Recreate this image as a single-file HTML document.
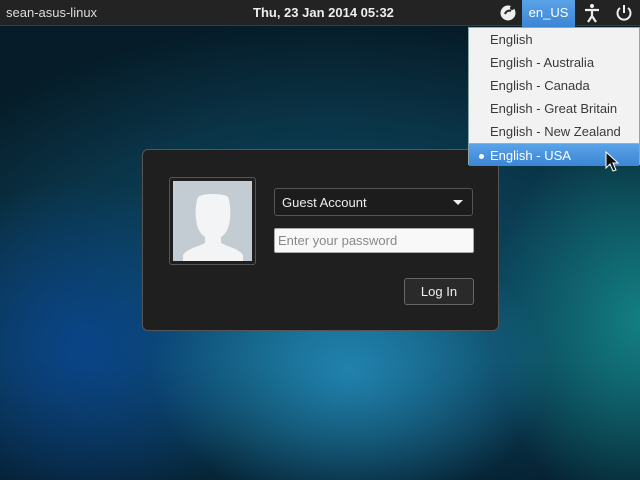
<!DOCTYPE html>
<html><head><meta charset="utf-8"><style>
*{margin:0;padding:0;box-sizing:border-box}
body{width:640px;height:480px;overflow:hidden;position:relative;font-family:"Liberation Sans","DejaVu Sans",sans-serif;
background:
radial-gradient(ellipse 200px 140px at 350px 370px, rgba(35,135,180,0.9), rgba(35,135,180,0) 100%),
radial-gradient(ellipse 150px 200px at 640px 320px, rgba(20,140,140,0.85), rgba(20,140,140,0) 100%),
radial-gradient(ellipse 180px 170px at 80px 350px, rgba(10,70,150,0.8), rgba(10,70,150,0) 100%),
linear-gradient(to bottom, rgba(0,0,0,0) 75%, rgba(3,20,35,0.6) 100%),
radial-gradient(ellipse 500px 320px at 330px 340px, #0e5878, #0a3346 70%, #061c28 100%);}
.top{position:absolute;left:0;top:0;width:640px;height:26px;background:#232323;border-bottom:1px solid #3a3a3a;color:#ddd;font-size:13px;z-index:2}
.host{position:absolute;left:6px;top:5px}
.date{position:absolute;left:253px;top:5px;font-weight:bold;color:#eee}
.ind{position:absolute;top:0;height:26px;width:28px}
.lang{position:absolute;left:522px;top:0;width:53px;height:27px;background:linear-gradient(#5aa3e8,#3c85d4);color:#fff;font-size:13px;text-align:center;padding-top:5px}
.menu{position:absolute;left:468px;top:27px;width:172px;height:138px;background:#f2f2f2;border:1px solid #8aa;font-size:13px;color:#3a3a3a;z-index:5}
.menu div{height:23px;padding:4px 0 0 21px}
.menu .sel{background:linear-gradient(#5aa3e8,#3c85d4);color:#fff;position:relative;border-top:1px solid #7bb7ee}
.menu .sel:before{content:"";position:absolute;left:10px;top:10px;width:5px;height:5px;border-radius:50%;background:#fff}
.box{position:absolute;left:142px;top:149px;width:357px;height:182px;background:#1f1f1f;border:1px solid #555;border-radius:6px;z-index:1}
.av{position:absolute;left:26px;top:27px;width:87px;height:88px;border:1px solid #555;border-radius:3px;padding:3px}
.av div{width:79px;height:80px;background:#c3ccd3;overflow:hidden;position:relative}
.sel1{position:absolute;left:131px;top:38px;width:199px;height:28px;border:1px solid #555;border-radius:3px;background:#1c1c1c;color:#eee;font-size:13px;padding:6px 0 0 7px}
.sel1:after{content:"";position:absolute;right:9px;top:11px;border:5px solid transparent;border-top:5px solid #eee}
.pw{position:absolute;left:131px;top:78px;width:200px;height:25px;background:#f8f8f8;border:1px solid #aaa;border-radius:2px;color:#888;font-size:13px;padding:4px 0 0 3px}
.btn{position:absolute;left:261px;top:128px;width:70px;height:27px;border:1px solid #666;border-radius:3px;background:#2a2a2a;color:#eee;font-size:13px;text-align:center;padding-top:5px}
</style></head><body>
<div class="top">
<span class="host">sean-asus-linux</span>
<span class="date">Thu, 23 Jan 2014 05:32</span>
<svg class="ind" style="left:494px" viewBox="0 0 28 26"><circle cx="14" cy="13" r="7.5" fill="#eee"/><path d="M11 14c1-3 4-4 6-3" stroke="#232323" stroke-width="2" fill="none"/><circle cx="18" cy="8" r="2" fill="#232323"/></svg>
<div class="lang">en_US</div>
<svg class="ind" style="left:578px" viewBox="0 0 28 26"><circle cx="14" cy="6" r="2" fill="#eee"/><path d="M7 10h14M14 10v6M14 16l-4 6M14 16l4 6" stroke="#eee" stroke-width="2.2" fill="none"/></svg>
<svg class="ind" style="left:610px" viewBox="0 0 28 26"><path d="M10 8a6.5 6.5 0 1 0 8 0" stroke="#eee" stroke-width="2" fill="none"/><path d="M14 5v8" stroke="#eee" stroke-width="2"/></svg>
</div>
<div class="menu">
<div>English</div><div>English - Australia</div><div>English - Canada</div><div>English - Great Britain</div><div>English - New Zealand</div><div class="sel">English - USA</div>
</div>
<svg style="position:absolute;left:605px;top:151px;z-index:6" width="14" height="22" viewBox="0 0 14 22"><path d="M1 1v16l4-4 3 7 3-1-3-7h5z" fill="#111" stroke="#fff" stroke-width="1"/></svg>
<div class="box">
<div class="av"><div><svg width="79" height="80" viewBox="0 0 79 80"><path d="M10 82v-8c4-6 14-8 22-12v-6c-6-4-8-10-9-18-1-6 0-18 2-22 4-4 26-4 30 0 2 4 3 16 2 22-1 8-3 14-9 18v6c8 4 18 6 22 12v8z" fill="#f2f4f6"/></svg></div></div>
<div class="sel1">Guest Account</div>
<div class="pw">Enter your password</div>
<div class="btn">Log In</div>
</div>
</body></html>
